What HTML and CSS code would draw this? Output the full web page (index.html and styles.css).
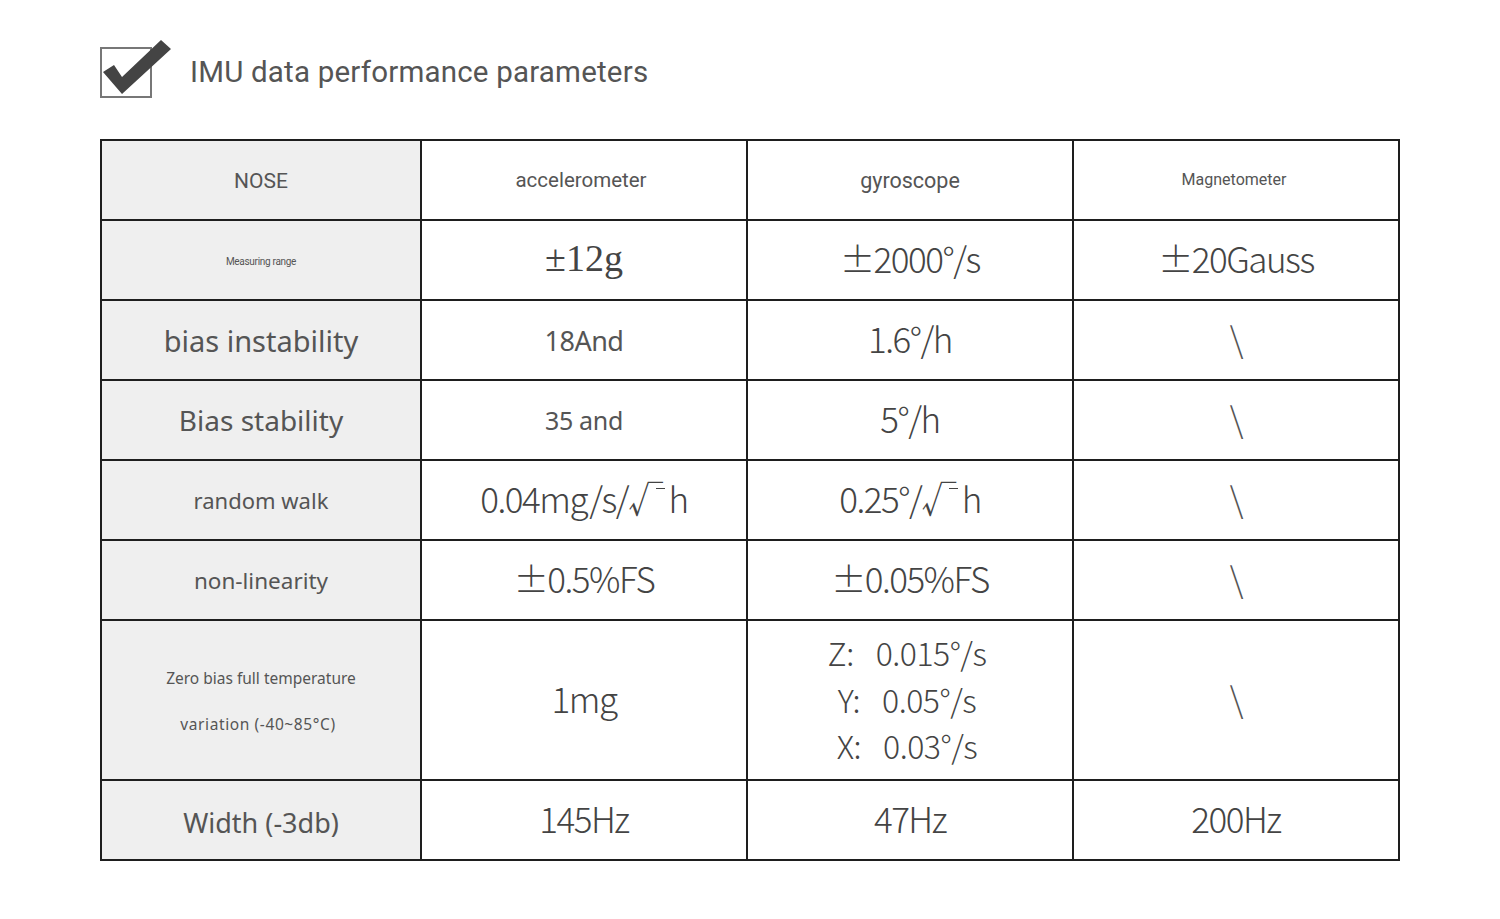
FILE: index.html
```html
<!DOCTYPE html>
<html lang="en">
<head>
<meta charset="utf-8">
<title>IMU data performance parameters</title>
<link rel="stylesheet" href="styles.css">
</head>
<body>
<div class="page">
  <header class="heading">
    <svg class="check-icon" width="80" height="70" viewBox="0 0 80 70" aria-hidden="true">
      <rect x="6" y="13" width="50" height="49" fill="#fff" stroke="#777" stroke-width="2"/>
      <polygon points="8,37 19,30 27,42 66,5 76,14 27,59" fill="#444"/>
    </svg>
    <h1 class="title">IMU data performance parameters</h1>
  </header>

  <table class="spec">
    <colgroup>
      <col class="c-label"><col class="c-val"><col class="c-val"><col class="c-val">
    </colgroup>
    <tr class="row">
      <th class="label t-nose">NOSE</th>
      <td class="head t-acc">accelerometer</td>
      <td class="head t-gyro">gyroscope</td>
      <td class="head t-mag">Magnetometer</td>
    </tr>
    <tr class="row">
      <th class="label t-tiny">Measuring range</th>
      <td class="val serif">±12g</td>
      <td class="val">±2000°/s</td>
      <td class="val">±20Gauss</td>
    </tr>
    <tr class="row">
      <th class="label t-big">bias instability</th>
      <td class="val v-mid">18And</td>
      <td class="val">1.6°/h</td>
      <td class="val slash">\</td>
    </tr>
    <tr class="row">
      <th class="label t-lg">Bias stability</th>
      <td class="val v-sm">35 and</td>
      <td class="val">5°/h</td>
      <td class="val slash">\</td>
    </tr>
    <tr class="row">
      <th class="label t-md">random walk</th>
      <td class="val">0.04mg/s/√<span class="bar"></span>h</td>
      <td class="val">0.25°/√<span class="bar"></span>h</td>
      <td class="val slash">\</td>
    </tr>
    <tr class="row">
      <th class="label t-md2">non-linearity</th>
      <td class="val">±0.5%FS</td>
      <td class="val">±0.05%FS</td>
      <td class="val slash">\</td>
    </tr>
    <tr class="row tall">
      <th class="label t-sm"><span class="ln">Zero bias full temperature</span><span class="ln ln2">variation (-40~85°C)</span></th>
      <td class="val">1mg</td>
      <td class="val multi"><span class="ml">Z:<span class="gap"></span>0.015°/s</span><span class="ml">Y:<span class="gap"></span>0.05°/s</span><span class="ml">X:<span class="gap"></span>0.03°/s</span></td>
      <td class="val slash">\</td>
    </tr>
    <tr class="row">
      <th class="label t-lg2">Width (-3db)</th>
      <td class="val">145Hz</td>
      <td class="val">47Hz</td>
      <td class="val">200Hz</td>
    </tr>
  </table>
</div>
</body>
</html>
```

FILE: styles.css
```css
html, body {
  margin: 0;
  padding: 0;
  background: #fff;
}

.page {
  padding: 35px 100px 0 100px;
  font-family: Roboto, "Noto Sans", sans-serif;
  color: #555;
}

.heading {
  display: flex;
  align-items: center;
  height: 70px;
  margin-left: -5px;
  gap: 15px;
}

.check-icon {
  display: block;
  flex: none;
}

.title {
  margin: 0;
  padding-top: 3px;
  font-size: 29.5px;
  font-weight: 400;
  color: #555;
  letter-spacing: 0.2px;
}

.spec {
  margin-top: 34px;
  border-collapse: collapse;
  table-layout: fixed;
  width: 1300px;
  border: 2px solid #1e1e1e;
}

.c-label { width: 320px; }
.c-val { width: 326px; }

.spec th,
.spec td {
  border: 2px solid #1e1e1e;
  padding: 0;
  text-align: center;
  vertical-align: middle;
}

.row { height: 80px; }
.row.tall { height: 160px; }

.label {
  background: #efefef;
  font-weight: 400;
  color: #555;
  font-family: "Noto Sans", Roboto, sans-serif;
}

.t-nose { font-size: 21px; font-family: Roboto, sans-serif; padding-top: 2px !important; }
.t-tiny { font-size: 10px; letter-spacing: -0.3px; font-family: Roboto, sans-serif; padding-top: 3px !important; }
.t-big { font-size: 29px; }
.t-lg { font-size: 28px; }
.t-lg2 { font-size: 27px; padding-top: 4px !important; }
.t-md { font-size: 22px; }
.t-md2 { font-size: 22.5px; }
.t-sm { font-size: 15.5px; padding-top: 2px !important; }

.ln {
  display: block;
  line-height: 46px;
}
.ln2 {
  letter-spacing: 0.6px;
  padding-right: 6px;
}

.head {
  font-family: Roboto, sans-serif;
  color: #555;
}
.t-acc { font-size: 20.5px; padding-right: 6px !important; }
.t-gyro { font-size: 21.5px; }
.t-mag { font-size: 16px; padding-bottom: 2px !important; padding-right: 4px !important; }

.val {
  font-family: "Noto Sans CJK SC", sans-serif;
  font-weight: 300;
  font-size: 35px;
  letter-spacing: -1.5px;
  color: #444;
  padding-bottom: 5px !important;
}

.val.serif {
  font-family: "Liberation Serif", "Noto Sans CJK SC", serif;
  font-weight: 400;
  font-size: 38px;
  letter-spacing: 0;
}

.val.v-mid {
  font-family: "Noto Sans", sans-serif;
  font-weight: 400;
  font-size: 27px;
  letter-spacing: -0.5px;
  color: #555;
  padding-bottom: 0 !important;
}

.val.v-sm {
  font-family: "Noto Sans", sans-serif;
  font-weight: 400;
  font-size: 25px;
  letter-spacing: -0.3px;
  color: #555;
  padding-bottom: 0 !important;
}

.val.slash {
  color: #555;
}

.bar {
  display: inline-block;
  width: 9px;
  height: 0;
  border-top: 1.5px solid #444;
  vertical-align: 0.7em;
  margin-left: -6px;
  margin-right: 4px;
}

.val.multi {
  padding-bottom: 2px !important;
}

.ml {
  display: block;
  line-height: 46.5px;
  height: 46.5px;
  font-size: 32px;
  letter-spacing: -0.5px;
  padding-right: 6px;
}

.gap {
  display: inline-block;
  width: 22px;
}
```
